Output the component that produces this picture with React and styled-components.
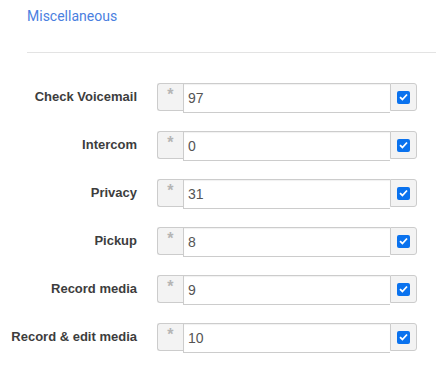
import React from 'react';
import styled, { createGlobalStyle } from 'styled-components';

const Global = createGlobalStyle`
  body {
    margin: 0;
    background: #fff;
    font-family: "Liberation Sans", Arial, sans-serif;
  }
`

const rows = [
  { label: 'Check Voicemail', value: '97' },
  { label: 'Intercom', value: '0' },
  { label: 'Privacy', value: '31' },
  { label: 'Pickup', value: '8' },
  { label: 'Record media', value: '9' },
  { label: 'Record & edit media', value: '10' },
]

export default function App() {
  return (
    <Page>
      <Global />
      <Header>
        <Title>Miscellaneous</Title>
      </Header>
      <Form>
        {rows.map(r => (
          <Row key={r.label}>
            <Label>{r.label}</Label>
            <Group>
              <Prefix>*</Prefix>
              <Input defaultValue={r.value} />
              <Suffix>
                <Check>
                  <svg width="9" height="8" viewBox="0 0 9 8">
                    <path d="M1 4.2 L3.4 6.5 L8 1.5" fill="none" stroke="#fff" strokeWidth="1.8" />
                  </svg>
                </Check>
              </Suffix>
            </Group>
          </Row>
        ))}
      </Form>
    </Page>
  );
}

const Page = styled.div`
  width: 436px;
  height: 366px;
  overflow: hidden;
`

const Header = styled.div`
  margin-left: 27px;
  padding-top: 6px;
  height: 46px;
  border-bottom: 1px solid #e3e3e3;
`

const Title = styled.div`
  font-family: Roboto, "Liberation Sans", sans-serif;
  font-size: 14px;
  line-height: 20px;
  color: #4a80e0;
`

const Form = styled.div`
  padding-top: 30px;
  display: flex;
  flex-direction: column;
  gap: 20px;
`

const Row = styled.div`
  display: flex;
  align-items: flex-start;
  height: 28px;
`

const Label = styled.div`
  width: 137px;
  text-align: right;
  padding-right: 20px;
  font-size: 13px;
  font-weight: bold;
  line-height: 28px;
  color: #3d3d3d;
`

const Group = styled.div`
  display: flex;
  align-items: flex-start;
  width: 260px;
`

const Prefix = styled.div`
  width: 25px;
  height: 26px;
  border: 1px solid #ccc;
  border-right: none;
  background: #f3f3f3;
  border-radius: 3px 0 0 3px;
  color: #b5b5b5;
  font-size: 16px;
  font-weight: bold;
  text-align: center;
  line-height: 22px;
`

const Input = styled.input`
  box-sizing: border-box;
  width: 208px;
  height: 30px;
  margin: 0;
  border: 1px solid #ccc;
  border-right: none;
  padding: 0 4px 0 4px;
  font-family: "Liberation Sans", Arial, sans-serif;
  font-size: 14px;
  color: #555;
  outline: none;
  box-shadow: inset 0 1px 1px rgba(0,0,0,0.06);
`

const Suffix = styled.div`
  width: 25px;
  height: 26px;
  border: 1px solid #ccc;
  background: #f3f3f3;
  border-radius: 0 3px 3px 0;
  display: flex;
  align-items: center;
  justify-content: center;
`

const Check = styled.div`
  width: 13px;
  height: 13px;
  border-radius: 2px;
  background: #0a72ee;
  display: flex;
  align-items: center;
  justify-content: center;
`
